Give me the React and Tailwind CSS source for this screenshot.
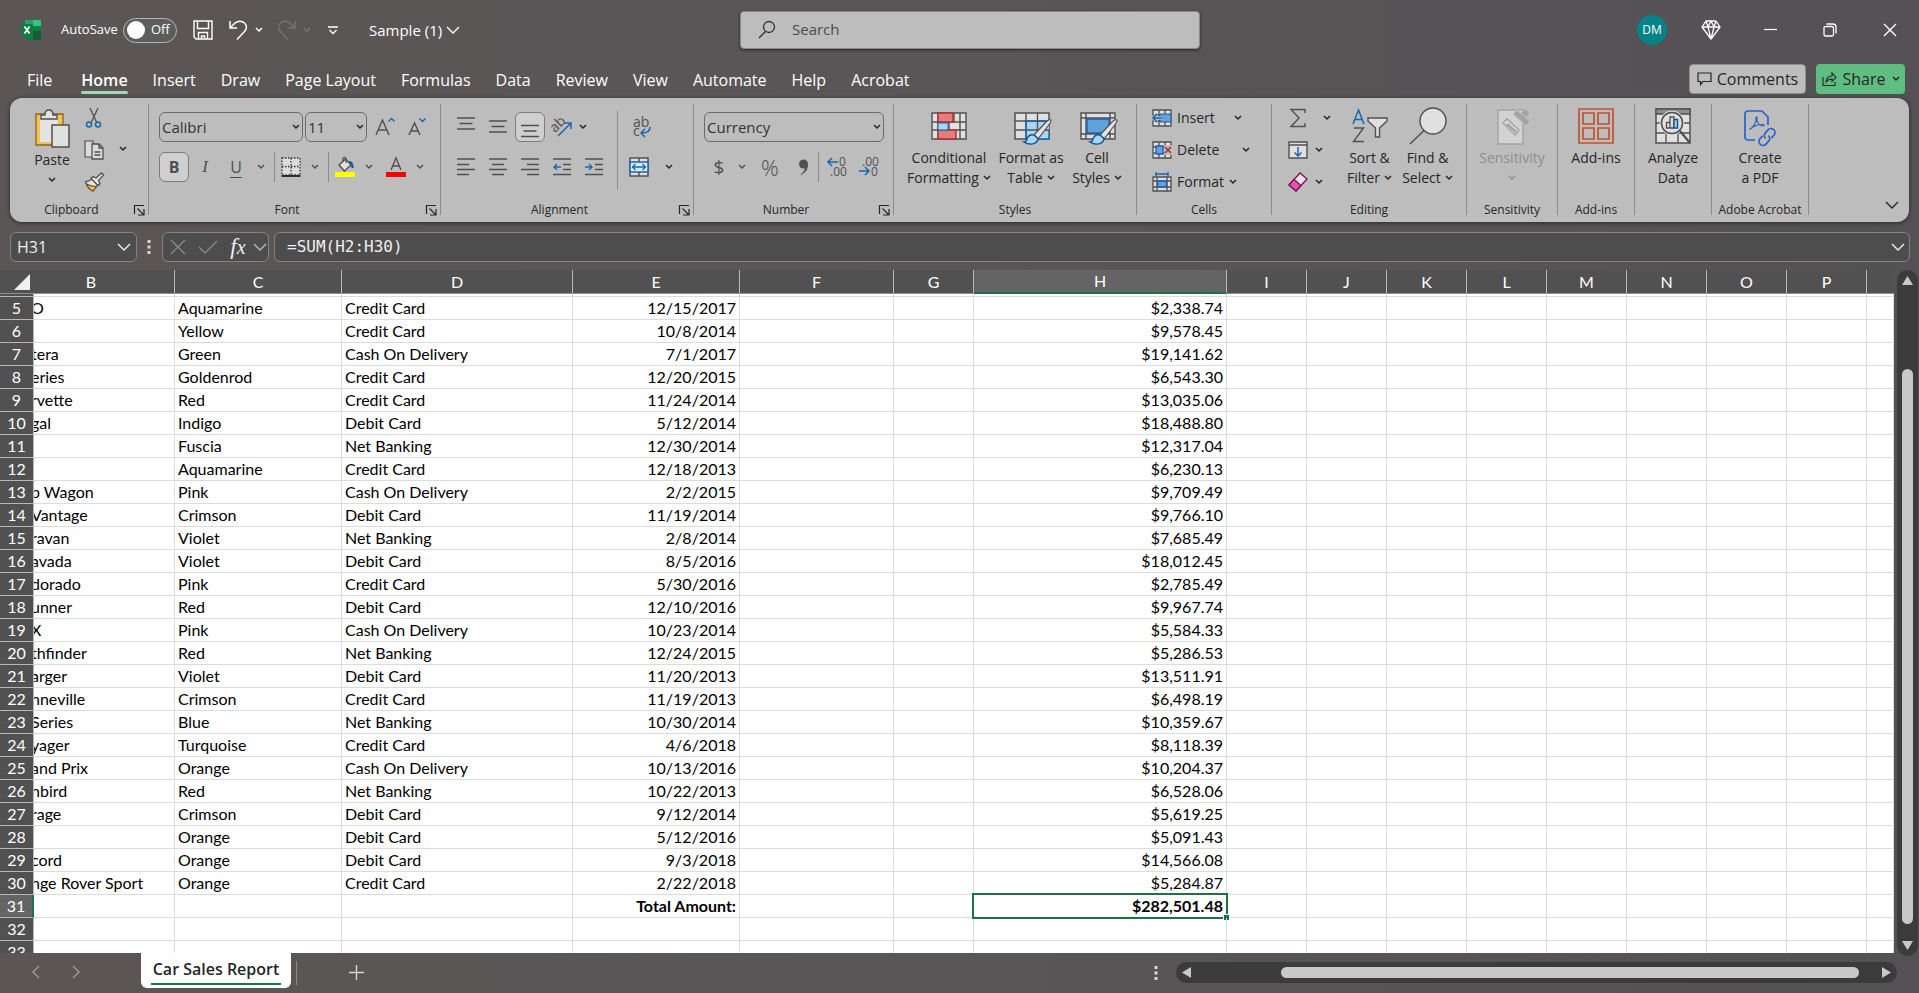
import clsx from "clsx";

// b holds the part of the model name left in view by the horizontal scroll
const rows = [
  { n: 5, b: "O", c: "Aquamarine", d: "Credit Card", e: "12/15/2017", h: "$2,338.74" },
  { n: 6, b: "", c: "Yellow", d: "Credit Card", e: "10/8/2014", h: "$9,578.45" },
  { n: 7, b: "tera", c: "Green", d: "Cash On Delivery", e: "7/1/2017", h: "$19,141.62" },
  { n: 8, b: "eries", c: "Goldenrod", d: "Credit Card", e: "12/20/2015", h: "$6,543.30" },
  { n: 9, b: "rvette", c: "Red", d: "Credit Card", e: "11/24/2014", h: "$13,035.06" },
  { n: 10, b: "gal", c: "Indigo", d: "Debit Card", e: "5/12/2014", h: "$18,488.80" },
  { n: 11, b: "", c: "Fuscia", d: "Net Banking", e: "12/30/2014", h: "$12,317.04" },
  { n: 12, b: "", c: "Aquamarine", d: "Credit Card", e: "12/18/2013", h: "$6,230.13" },
  { n: 13, b: "b Wagon", c: "Pink", d: "Cash On Delivery", e: "2/2/2015", h: "$9,709.49" },
  { n: 14, b: "Vantage", c: "Crimson", d: "Debit Card", e: "11/19/2014", h: "$9,766.10" },
  { n: 15, b: "ravan", c: "Violet", d: "Net Banking", e: "2/8/2014", h: "$7,685.49" },
  { n: 16, b: "avada", c: "Violet", d: "Debit Card", e: "8/5/2016", h: "$18,012.45" },
  { n: 17, b: "dorado", c: "Pink", d: "Credit Card", e: "5/30/2016", h: "$2,785.49" },
  { n: 18, b: "unner", c: "Red", d: "Debit Card", e: "12/10/2016", h: "$9,967.74" },
  { n: 19, b: "X", c: "Pink", d: "Cash On Delivery", e: "10/23/2014", h: "$5,584.33" },
  { n: 20, b: "thfinder", c: "Red", d: "Net Banking", e: "12/24/2015", h: "$5,286.53" },
  { n: 21, b: "arger", c: "Violet", d: "Debit Card", e: "11/20/2013", h: "$13,511.91" },
  { n: 22, b: "nneville", c: "Crimson", d: "Credit Card", e: "11/19/2013", h: "$6,498.19" },
  { n: 23, b: "Series", c: "Blue", d: "Net Banking", e: "10/30/2014", h: "$10,359.67" },
  { n: 24, b: "yager", c: "Turquoise", d: "Credit Card", e: "4/6/2018", h: "$8,118.39" },
  { n: 25, b: "and Prix", c: "Orange", d: "Cash On Delivery", e: "10/13/2016", h: "$10,204.37" },
  { n: 26, b: "nbird", c: "Red", d: "Net Banking", e: "10/22/2013", h: "$6,528.06" },
  { n: 27, b: "rage", c: "Crimson", d: "Debit Card", e: "9/12/2014", h: "$5,619.25" },
  { n: 28, b: "", c: "Orange", d: "Debit Card", e: "5/12/2016", h: "$5,091.43" },
  { n: 29, b: "cord", c: "Orange", d: "Debit Card", e: "9/3/2018", h: "$14,566.08" },
  { n: 30, b: "nge Rover Sport", c: "Orange", d: "Credit Card", e: "2/22/2018", h: "$5,284.87" },
  { n: 31, b: "", c: "", d: "", e: "Total Amount:", h: "$282,501.48" },
  { n: 32, b: "", c: "", d: "", e: "", h: "" },
  { n: 33, b: "", c: "", d: "", e: "", h: "" },
];

const columns = ["B", "C", "D", "E", "F", "G", "H", "I", "J", "K", "L", "M", "N", "O", "P", ""];
const emptyColumns = ["I", "J", "K", "L", "M", "N", "O", "P", "Q"];
const menu = ["File", "Home", "Insert", "Draw", "Page Layout", "Formulas", "Data", "Review", "View", "Automate", "Help", "Acrobat"];

function Svg({ w = 20, h = 20, children, className }) {
  return (
    <svg width={w} height={h} viewBox={`0 0 ${w} ${h}`} fill="none" stroke="#505050" className={clsx("shrink-0 overflow-visible", className)} aria-hidden="true">
      {children}
    </svg>
  );
}

function Chevron({ className }) {
  return (
    <Svg w={8} h={6} className={className}>
      <path d="M1 1l3 3 3-3" stroke="currentColor" strokeWidth="1.5" />
    </Svg>
  );
}

function BigChevron({ className }) {
  return (
    <Svg w={14} h={8} className={className}>
      <path d="M1 1l6 6 6-6" stroke="currentColor" strokeWidth="1.4" />
    </Svg>
  );
}

function IconButton({ label, className, children }) {
  return (
    <button type="button" aria-label={label} className={clsx("flex items-center justify-center shrink-0", className)}>
      {children}
    </button>
  );
}

function Drop({ label, className }) {
  return (
    <IconButton label={label} className={clsx("h-[30px]", className || "w-4")}>
      <Chevron />
    </IconButton>
  );
}

function Select({ label, value, className }) {
  return (
    <div className={clsx("relative", className)}>
      <select
        aria-label={label}
        className="w-full h-[30px] appearance-none rounded-md border border-[#6b6b6b] pl-[2px] text-[15px] text-[#333]"
      >
        <option>{value}</option>
      </select>
      <Chevron className="absolute right-[3px] top-3 pointer-events-none" />
    </div>
  );
}

function Group({ title, launcher, className, children }) {
  return (
    <div className={clsx("flex shrink-0", className)}>
      <div className="flex-1 min-w-0 flex flex-col">
        <div className="h-24 flex justify-center">{children}</div>
        <div className={clsx("h-5 flex items-center", launcher && "pr-[3px]")}>
          <span className="flex-1 text-center text-xs whitespace-nowrap">{title}</span>
          {launcher && (
            <IconButton label={`${title} settings`} className="w-3">
              <Svg w={12} h={12}>
                <path d="M1.5 10V1.5H11M4.5 4.5l6 6M11 5v6H5" stroke="#262626" strokeWidth="1.2" />
              </Svg>
            </IconButton>
          )}
        </div>
      </div>
      <div className="w-px h-[111px] bg-[#8c8c8c]" />
    </div>
  );
}

function BigButton({ icon, lines, drop, className }) {
  return (
    <button type="button" className={clsx("flex flex-col items-center text-sm leading-5 whitespace-nowrap", className)}>
      <span className="h-11 flex items-center">{icon}</span>
      {lines.map((line, i) => (
        <span key={line} className="flex items-center gap-1 h-5">
          {line}
          {drop && i === lines.length - 1 && <Chevron />}
        </span>
      ))}
    </button>
  );
}

function Lines({ d }) {
  return (
    <Svg w={18} h={20}>
      <path d={d} strokeWidth="1.3" />
    </Svg>
  );
}

function Brush() {
  return (
    <>
      <path d="M37 10c-2-1-3 0-5 2L20 25l4 4 10-13c2-3 4-5 3-6z" fill="#e3e3e3" strokeWidth="1.2" />
      <path d="M20 25c-4-1-6 1-7 4-.6 2-1.500 3-3 3 3 2 8 3 11 1 2-1 3-3 3-4.500z" fill="#a9d5f2" stroke="#14568c" strokeWidth="1.4" />
    </>
  );
}

function TitleBar() {
  return (
    <header className="h-[60px] flex items-center pl-[21px] text-white">
      <div className="flex-1 flex items-center">
        <Svg className="mr-5">
          <path d="M5 0h14a1 1 0 011 1v18a1 1 0 01-1 1H5z" fill="#107c41" stroke="none" />
          <path d="M12 0h7a1 1 0 011 1v5h-8z" fill="#33c481" stroke="none" />
          <path d="M4 0h8v6H4z" fill="#21a366" stroke="none" />
          <path d="M12 11h8v8a1 1 0 01-1 1h-7z" fill="#185c37" stroke="none" />
          <path d="M0 4h11a1 1 0 011 1v10a1 1 0 01-1 1H0z" fill="#107c41" stroke="none" />
          <path d="M3.500 6.500l5 7M8.500 6.500l-5 7" stroke="#fff" strokeWidth="1.800" />
        </Svg>
        <span id="autosave" className="text-[13px] w-[62px]">AutoSave</span>
        <button type="button" role="switch" aria-checked="false" aria-labelledby="autosave" className="w-[54px] h-[25px] rounded-full border border-[#b5b3b3] flex items-center pl-[3px] gap-[6px] text-[13px] bg-[#5e5d5d]">
          <span className="w-[18px] h-[18px] rounded-full bg-white" />
          Off
        </button>
        <IconButton label="Save" className="ml-4">
          <Svg>
            <path d="M1 1h18v18H3l-2-2zM4.500 1v7.500h11V1M5.500 19v-6.500h9V19M8.500 19v-3h3v3" stroke="#fff" strokeWidth="1.400" />
          </Svg>
        </IconButton>
        <IconButton label="Undo" className="ml-4">
          <Svg>
            <path d="M1 1v7h7M1.500 7.500L6 3c3-2.500 7-2.500 9.500 0s2.500 6 0 8.500L8 19.500" stroke="#fff" strokeWidth="1.500" />
          </Svg>
        </IconButton>
        <IconButton label="Undo history" className="ml-[2px] w-4"><Chevron /></IconButton>
        <IconButton label="Redo" className="ml-[10px] text-[#777274]">
          <Svg>
            <path d="M18 1v7h-7M17.500 7.500L13 3c-3-2.500-7-2.500-9.500 0s-2.500 6 0 8.500L11 19.500" stroke="currentColor" strokeWidth="1.500" />
          </Svg>
        </IconButton>
        <IconButton label="Redo history" className="ml-[2px] w-4 text-[#777274]"><Chevron /></IconButton>
        <IconButton label="Customize toolbar" className="ml-2 w-5">
          <Svg w={10} h={9}>
            <path d="M0 1h10M1.500 4L5 7.500 8.500 4" stroke="#fff" strokeWidth="1.300" />
          </Svg>
        </IconButton>
        <button type="button" className="ml-[26px] flex items-center gap-1 text-[15px]">
          Sample (1)
          <BigChevron />
        </button>
      </div>

      <label className="w-[460px] h-[38px] -mt-px rounded bg-[#bdbdbd] border border-[#8a8888] shadow-[0_1px_3px_#222] flex items-center pl-[17px] gap-4">
        <Svg w={18} h={20}>
          <circle cx="11" cy="7" r="5.500" stroke="#333" strokeWidth="1.300" />
          <path d="M7.500 11.500L1 18" stroke="#333" strokeWidth="1.300" />
        </Svg>
        <input type="text" aria-label="Search" placeholder="Search" className="flex-1 text-[15px] placeholder:text-[#4c4c4c] outline-none" />
      </label>

      <div className="flex-1 flex items-center justify-end">
        <button type="button" className="w-[30px] h-[30px] rounded-full bg-[#038387] text-xs">DM</button>
        <IconButton label="Premium" className="ml-[34px] mr-[19px]">
          <Svg>
            <path d="M5 1h10l4 6-9 12L1 7zM1 7h18M5 1l2 6 3 12 3-12 2-6M7 7l3-6 3 6" stroke="#fff" strokeWidth="1.300" strokeLinejoin="round" />
          </Svg>
        </IconButton>
        <IconButton label="Minimize" className="w-[60px]">
          <Svg w={14} h={14}><path d="M1 6.500h13" stroke="#fff" strokeWidth="1.200" /></Svg>
        </IconButton>
        <IconButton label="Restore" className="w-[60px]">
          <Svg w={14} h={14}>
            <rect x="1" y="3.500" width="9.500" height="9.500" rx="1.500" stroke="#fff" strokeWidth="1.300" />
            <path d="M3.500 1H10a3 3 0 013 3v6.500" stroke="#fff" strokeWidth="1.300" />
          </Svg>
        </IconButton>
        <IconButton label="Close" className="w-[59px]">
          <Svg w={14} h={14}><path d="M1 1l12 12M13 1L1 13" stroke="#fff" strokeWidth="1.400" /></Svg>
        </IconButton>
      </div>
    </header>
  );
}

function MenuBar() {
  return (
    <nav className="h-[38px] flex items-center justify-between pl-[27px] pr-[14px] text-white">
      <div className="flex items-center gap-[25px] pt-[2px]">
        {menu.map((item) => (
          <button key={item} type="button" className={clsx("relative text-base whitespace-nowrap first:mr-1", item === "Home" && "font-semibold")}>
            {item}
            {item === "Home" && <span className="absolute inset-x-0 -bottom-[2px] h-[3px] rounded bg-[#9fd8b9]" />}
          </button>
        ))}
      </div>
      <div className="flex items-center gap-[10px] text-[#262626] text-base">
        <button type="button" className="w-[117px] h-[30px] rounded bg-[#bdbdbd] border border-[#8f8f8f] flex items-center justify-center gap-[5px]">
          <Svg w={15} h={14}>
            <path d="M1 1h13v8.500H6L3.500 12.500v-3H1z" stroke="#262626" strokeWidth="1.200" />
          </Svg>
          Comments
        </button>
        <button type="button" className="w-[89px] h-[30px] rounded bg-[#5fbd82] flex items-center justify-center gap-[6px]">
          <Svg w={15} h={16}>
            <path d="M1 6v8.500h12V11M4 11c.500-4 2.500-6 6-6V2l4 4.500-4 4V8c-3 0-4.500 1-6 3z" stroke="#262626" strokeWidth="1.100" />
          </Svg>
          Share
          <Chevron />
        </button>
      </div>
    </nav>
  );
}

function ClipboardGroup() {
  return (
    <Group title="Clipboard" launcher className="w-[139px]">
      <div className="flex w-full pl-5">
        <BigButton
          className="w-11 mr-[10px] pt-[2px]"
          drop
          lines={["Paste", ""]}
          icon={
            <Svg w={36} h={40}>
              <path d="M2 6h27v31H2z" fill="#f3c15b" stroke="#8a6416" strokeWidth="1.300" />
              <path d="M6 8h18v26H6z" fill="#e3e3e3" stroke="none" />
              <path d="M7 11V7h4c0-3 1-5 4-5s4 2 4 5h4v4z" fill="#e3e3e3" strokeWidth="1.400" />
              <rect x="18" y="17" width="17" height="22" fill="#e0e0e0" strokeWidth="1.500" />
            </Svg>
          }
        />
        <div className="flex flex-col -mt-[2px]">
          <IconButton label="Cut" className="w-5 h-8">
            <Svg>
              <path d="M6 0l6.500 14M14 0L7.500 14" strokeWidth="1.300" />
              <circle cx="5" cy="16.500" r="2.500" stroke="#1767ad" strokeWidth="1.500" />
              <circle cx="14" cy="16.500" r="2.500" stroke="#1767ad" strokeWidth="1.500" />
            </Svg>
          </IconButton>
          <IconButton label="Copy" className="w-5 h-8">
            <Svg>
              <path d="M8 17H1V1h8v3" fill="#dadada" strokeWidth="1.200" />
              <path d="M8 4h7l4 4v11H8zM15 4v4h4M10.500 12h6M10.500 15h6" fill="#dadada" strokeWidth="1.300" />
            </Svg>
          </IconButton>
          <IconButton label="Format painter" className="w-5 h-8">
            <Svg>
              <path d="M1.500 9.500c3 0 5-1 6.500-3l6 6c-1.500 2-3 4-5 6.500C6 18 3.500 15 1.500 9.500z" fill="#e3e3e3" strokeWidth="1.200" />
              <path d="M2.500 12c4 2.500 6 2.500 10 2.500L9 19c-3-1-5-3-6.500-7z" fill="#f3c15b" stroke="#6b5118" strokeWidth="1.200" />
              <path d="M7 6.500l2-2 3 1.500L17.500 1l2 2-5 5.500 1.500 3-2 2z" fill="#e3e3e3" strokeWidth="1.300" />
            </Svg>
          </IconButton>
        </div>
        <Drop label="Copy options" className="w-4 ml-[11px] mt-[30px]" />
      </div>
    </Group>
  );
}

function FontGroup() {
  return (
    <Group title="Font" launcher className="w-[292px]">
      <div className="w-full pl-[10px] pt-2 flex flex-col gap-[10px]">
        <div className="flex items-center">
          <Select label="Font" value="Calibri" className="w-36" />
          <Select label="Font size" value="11" className="w-[62px] ml-[2px]" />
          <IconButton label="Increase font size" className="w-8 h-[30px] ml-[2px]">
            <Svg w={20} h={22}>
              <path d="M1 19L7.500 4 14 19M3.500 14h8" strokeWidth="1.400" />
              <path d="M13.500 5.500L16.500 2.500l3 3" stroke="#1767ad" strokeWidth="1.400" />
            </Svg>
          </IconButton>
          <IconButton label="Decrease font size" className="w-8 h-[30px]">
            <Svg w={18} h={22}>
              <path d="M1 19L6.500 7 12 19M3 15h7" strokeWidth="1.400" />
              <path d="M11.500 2.500l3 3 3-3" stroke="#1767ad" strokeWidth="1.400" />
            </Svg>
          </IconButton>
        </div>
        <div className="flex items-center text-[#505050]">
          <button type="button" aria-pressed="true" className="w-[30px] h-[30px] rounded-md border border-[#7d7d7d] bg-[#cfcfcf] font-bold text-base">B</button>
          <button type="button" className="w-8 h-[30px] italic text-[17px] font-[Liberation_Serif,serif]">I</button>
          <button type="button" className="w-[30px] h-[30px] text-base underline underline-offset-4">U</button>
          <Drop label="Underline options" className="w-4 ml-[2px]" />
          <div className="w-px h-[30px] bg-[#8c8c8c] ml-[5px]" />
          <IconButton label="Borders" className="w-8">
            <Svg>
              <rect x="1" y="1" width="18" height="17" fill="#dcdcdc" stroke="#333" strokeWidth="1.300" strokeDasharray="1.500 1.500" />
              <path d="M10 1v17M1 9.500h18" stroke="#333" strokeWidth="1.300" strokeDasharray="1.500 1.500" />
              <path d="M.500 19h19" stroke="#222" strokeWidth="1.800" />
            </Svg>
          </IconButton>
          <Drop label="Border options" />
          <div className="w-px h-[30px] bg-[#8c8c8c] ml-[5px]" />
          <IconButton label="Fill color" className="w-8">
            <Svg>
              <path d="M4 8l6.500-6L16 8l-6.500 6z" fill="#e0e0e0" strokeWidth="1.400" />
              <path d="M8 5V1.500C8 0 11 0 11 1.500V6" strokeWidth="1.200" />
              <path d="M14 5c3 0 3.500 2 3.500 6" stroke="#14568c" strokeWidth="2.200" />
              <path d="M0 15h20v5H0z" fill="#ff0" stroke="none" />
            </Svg>
          </IconButton>
          <Drop label="Fill color options" />
          <IconButton label="Font color" className="w-8 ml-[3px]">
            <Svg>
              <path d="M5 13L10 1l5 12M6.700 9h6.600" strokeWidth="1.400" />
              <path d="M0 15h20v5H0z" fill="#f00" stroke="none" />
            </Svg>
          </IconButton>
          <Drop label="Font color options" />
        </div>
      </div>
    </Group>
  );
}

function AlignmentGroup() {
  return (
    <Group title="Alignment" launcher className="w-[253px]">
      <div className="w-full pl-[9px] flex">
        <div className="w-[167px] pt-2 flex flex-col gap-[10px]">
          <div className="flex items-center">
            <IconButton label="Top align" className="w-8 h-[30px]"><Lines d="M0 1h18M2.500 6.500h13M0 12h18" /></IconButton>
            <IconButton label="Middle align" className="w-8 h-[30px]"><Lines d="M0 4h18M2.500 9.500h13M0 15h18" /></IconButton>
            <IconButton label="Bottom align" className="w-[30px] h-[30px] mx-px rounded-md border border-[#7d7d7d] bg-[#cfcfcf]"><Lines d="M0 8.500h18M2.500 14h13M0 19.500h18" /></IconButton>
            <IconButton label="Orientation" className="w-8 h-[30px]">
              <Svg w={22} h={20}>
                <text x="0" y="13" transform="rotate(-45 6 10)" fontSize="14" fill="#505050" stroke="none" fontFamily="Open Sans, sans-serif">ab</text>
                <path d="M7 19L20 6M14 6h6v6" stroke="#1767ad" strokeWidth="1.500" />
              </Svg>
            </IconButton>
            <Drop label="Orientation options" className="w-[10px]" />
          </div>
          <div className="flex items-center">
            <IconButton label="Align left" className="w-8 h-[30px]"><Lines d="M0 2h18M0 7.500h12M0 12.500h18M0 17.500h12" /></IconButton>
            <IconButton label="Center" className="w-8 h-[30px]"><Lines d="M0 2h18M3 7.500h12M0 12.500h18M3 17.500h12" /></IconButton>
            <IconButton label="Align right" className="w-8 h-[30px]"><Lines d="M0 2h18M6 7.500h12M0 12.500h18M6 17.500h12" /></IconButton>
            <IconButton label="Decrease indent" className="w-8 h-[30px]">
              <Svg w={18}>
                <path d="M0 2h18M10 7.500h8M10 12.500h8M0 17.500h18" strokeWidth="1.300" />
                <path d="M8 10H1M4 7l-3 3 3 3" stroke="#1767ad" strokeWidth="1.400" />
              </Svg>
            </IconButton>
            <IconButton label="Increase indent" className="w-8 h-[30px]">
              <Svg w={18}>
                <path d="M0 2h18M10 7.500h8M10 12.500h8M0 17.500h18" strokeWidth="1.300" />
                <path d="M0 10h7M4 7l3 3-3 3" stroke="#1767ad" strokeWidth="1.400" />
              </Svg>
            </IconButton>
          </div>
        </div>
        <div className="w-px h-[78px] mt-[7px] bg-[#8c8c8c]" />
        <div className="pt-2 pl-[11px] flex flex-col gap-[10px]">
          <IconButton label="Wrap text" className="w-6 h-[30px]">
            <Svg h={22}>
              <text x="2" y="11" fontSize="14" fill="#505050" stroke="none" fontFamily="Open Sans, sans-serif">ab</text>
              <text x="2" y="20" fontSize="14" fill="#505050" stroke="none" fontFamily="Open Sans, sans-serif">c</text>
              <path d="M19 11c0 4-3 6-8 6M14 13l-4 4 4 4" stroke="#1767ad" strokeWidth="1.500" />
            </Svg>
          </IconButton>
          <div className="flex items-center">
            <IconButton label="Merge and center" className="w-5">
              <Svg>
                <path d="M1 1h18v18H1zM10 1v5M10 15v4" fill="#e0e0e0" strokeWidth="1.500" />
                <path d="M1 5h18v10H1z" fill="#dcebf6" stroke="#1767ad" strokeWidth="1.500" />
                <path d="M3.500 10h13M6.500 7l-3 3 3 3M13.500 7l3 3-3 3" stroke="#1767ad" strokeWidth="1.300" />
              </Svg>
            </IconButton>
            <Drop label="Merge options" className="w-4 ml-3" />
          </div>
        </div>
      </div>
    </Group>
  );
}

function NumberGroup() {
  return (
    <Group title="Number" launcher className="w-[200px]">
      <div className="w-full pl-[10px] pt-2 flex flex-col gap-[10px]">
        <Select label="Number format" value="Currency" className="w-[180px]" />
        <div className="flex items-center text-[#505050]">
          <button type="button" className="w-[30px] text-[19px] leading-[30px]">$</button>
          <Drop label="Accounting options" />
          <button type="button" className="w-10 text-[22px] leading-[30px] font-light">%</button>
          <IconButton label="Comma style" className="w-7">
            <Svg w={12} h={18}>
              <circle cx="5.500" cy="6" r="4.500" fill="#505050" stroke="none" />
              <path d="M10 6c0 5-2 9-8 11 3-2 5-5 5-8z" fill="#505050" stroke="none" />
            </Svg>
          </IconButton>
          <div className="w-px h-[30px] bg-[#8c8c8c]" />
          <IconButton label="Increase decimal" className="w-8 ml-[2px]">
            <Svg w={20} h={22}>
              <text x="12" y="10" fontSize="12" fill="#505050" stroke="none" fontFamily="Open Sans, sans-serif">0</text>
              <text x="3" y="20" fontSize="12" fill="#505050" stroke="none" fontFamily="Open Sans, sans-serif">.00</text>
              <path d="M11 6H1M5 2L1 6l4 4" stroke="#1767ad" strokeWidth="1.500" />
            </Svg>
          </IconButton>
          <IconButton label="Decrease decimal" className="w-8">
            <Svg w={20} h={22}>
              <text x="3" y="10" fontSize="12" fill="#505050" stroke="none" fontFamily="Open Sans, sans-serif">.00</text>
              <text x="12" y="20" fontSize="12" fill="#505050" stroke="none" fontFamily="Open Sans, sans-serif">0</text>
              <path d="M0 15h10M6 11l4 4-4 4" stroke="#1767ad" strokeWidth="1.500" />
            </Svg>
          </IconButton>
        </div>
      </div>
    </Group>
  );
}

function StylesGroup() {
  return (
    <Group title="Styles" className="w-[243px]">
      <BigButton
        className="w-[88px]"
        drop
        lines={["Conditional", "Formatting"]}
        icon={
          <Svg w={36} h={28}>
            <path d="M1 1h34v26H1zM1 10h34M1 18h34M7 1v26M23 1v9M29 1v26M18 10v8" fill="#e0e0e0" strokeWidth="1.400" />
            <path d="M7 1h15v9H7zM7 18h18v9H7z" fill="#e87c7c" stroke="#a83232" strokeWidth="1.400" />
            <path d="M7 11h10v7H7z" fill="#a9d5f2" stroke="#1767ad" />
          </Svg>
        }
      />
      <BigButton
        className="w-[76px]"
        drop
        lines={["Format as", "Table"]}
        icon={
          <Svg w={38} h={36} className="ml-1">
            <path d="M1 5h34v26H1z" fill="#e0e0e0" strokeWidth="1.500" />
            <path d="M12 13h23v18H12z" fill="#a9d5f2" stroke="none" />
            <path d="M12 5v26M23.500 5v26M1 13h34M1 22h34" strokeWidth="1.400" />
            <path d="M12 13h23M12 13v18h23V22" stroke="#1767ad" strokeWidth="1.400" />
            <g transform="translate(0 2)"><Brush /></g>
          </Svg>
        }
      />
      <BigButton
        className="w-14"
        drop
        lines={["Cell", "Styles"]}
        icon={
          <Svg w={38} h={36} className="ml-1">
            <path d="M1 5h34v26H1zM6 5v26M30 5v26M1 10h34M1 26h34" fill="#e0e0e0" strokeWidth="1.400" />
            <path d="M7 11h22v14H7z" fill="#5fa3d9" stroke="#2659ad" strokeWidth="1.400" />
            <g transform="translate(0 2)"><Brush /></g>
          </Svg>
        }
      />
    </Group>
  );
}

function CellsGroup() {
  const grid = <path d="M1 2h18v16H1zM7 2v16M13 2v16M1 7h18M1 13h18" fill="#e0e0e0" strokeWidth="1.300" />;
  return (
    <Group title="Cells" className="w-[135px]">
      <div className="w-full pl-[15px] -mt-[2px] flex flex-col text-sm">
        <button type="button" className="h-8 flex items-center gap-[5px]">
          <Svg>
            {grid}
            <path d="M8 6h11v8H8z" fill="#5fa3d9" stroke="#2659ad" />
            <path d="M10 10H1M5 6l-4 4 4 4" stroke="#bdbdbd" strokeWidth="3.500" />
            <path d="M10 10H1M5 6l-4 4 4 4" stroke="#1767ad" strokeWidth="1.500" />
          </Svg>
          <span className="w-[52px] text-left">Insert</span>
          <Chevron />
        </button>
        <button type="button" className="h-8 flex items-center gap-[5px]">
          <Svg>
            {grid}
            <path d="M4 6h7v8H4z" fill="#5fa3d9" stroke="#2659ad" strokeWidth="1.300" />
            <path d="M12 5h8v10h-8z" fill="#bdbdbd" stroke="none" />
            <path d="M13 7l6 6M19 7l-6 6" stroke="#b32b2b" strokeWidth="1.600" />
          </Svg>
          <span className="w-[60px] text-left">Delete</span>
          <Chevron />
        </button>
        <button type="button" className="h-8 flex items-center gap-[5px]">
          <Svg>
            <path d="M1 5h18v14H1zM5 5v14M15 5v14M1 9h18M1 15h18" fill="#e0e0e0" strokeWidth="1.300" />
            <path d="M5.500 9h9v6h-9z" fill="#5fa3d9" stroke="#2659ad" strokeWidth="1.300" />
            <path d="M4 0v4M16 0v4M4 2h12" stroke="#1767ad" strokeWidth="1.400" />
          </Svg>
          Format
          <Chevron />
        </button>
      </div>
    </Group>
  );
}

function EditingGroup() {
  return (
    <Group title="Editing" className="w-[195px]">
      <div className="flex flex-col ml-1 -mt-[2px]">
        <div className="flex items-center h-8">
          <IconButton label="Sum" className="w-5">
            <Svg><path d="M17 5V1.500H3L11 10l-8 8.500h14V15" strokeWidth="1.400" /></Svg>
          </IconButton>
          <Drop label="Sum options" className="w-4 ml-[11px]" />
        </div>
        <div className="flex items-center h-8">
          <IconButton label="Fill" className="w-5">
            <Svg>
              <path d="M1 2h18v16H1zM1 5h18" fill="#e0e0e0" strokeWidth="1.400" />
              <path d="M10 7v9M6.500 12.500L10 16l3.500-3.500" stroke="#1767ad" strokeWidth="1.500" />
            </Svg>
          </IconButton>
          <Drop label="Fill options" className="w-4 ml-[3px]" />
        </div>
        <div className="flex items-center h-8">
          <IconButton label="Clear" className="w-5">
            <Svg>
              <path d="M1 13L12 1l7 6L8 19z" fill="#e3e3e3" stroke="#7d1458" strokeWidth="1.300" />
              <path d="M1 13l5-5.500 7 6L8 19z" fill="#dd55ad" stroke="#7d1458" strokeWidth="1.300" />
            </Svg>
          </IconButton>
          <Drop label="Clear options" className="w-4 ml-[3px]" />
        </div>
      </div>
      <BigButton
        className="w-[62px] ml-1"
        drop
        lines={["Sort &", "Filter"]}
        icon={
          <Svg w={36} h={36}>
            <path d="M1 16L6.500 2 12 16M3 11.500h7" stroke="#1767ad" strokeWidth="1.500" />
            <path d="M2 20h9.500L1.500 33.500H12" strokeWidth="1.400" />
            <path d="M16 10h19v3l-7.500 7v9h-4v-9L16 13z" fill="#e0e0e0" strokeWidth="1.400" />
          </Svg>
        }
      />
      <BigButton
        className="w-[54px]"
        drop
        lines={["Find &", "Select"]}
        icon={
          <Svg w={38} h={38}>
            <circle cx="24" cy="14" r="13" fill="#e0e0e0" strokeWidth="1.400" />
            <path d="M15 23.500L1 37" strokeWidth="1.500" />
          </Svg>
        }
      />
    </Group>
  );
}

function Ribbon() {
  return (
    <section className="mx-[10px] h-[124px] pt-1.5 rounded-xl bg-[#bdbdbd] shadow-[0_1px_4px_#2a2a2a] flex text-[#262626]">
      <ClipboardGroup />
      <FontGroup />
      <AlignmentGroup />
      <NumberGroup />
      <StylesGroup />
      <CellsGroup />
      <EditingGroup />
      <Group title="Sensitivity" className="w-[91px]">
        <button type="button" disabled className="flex flex-col items-center text-sm text-[#8d8d8d]">
          <span className="h-11 flex items-center">
            <Svg w={36} h={40} className="ml-1">
              <path d="M2 4h25v34H2z" fill="#d2d2d2" stroke="#a3a3a3" strokeWidth="1.400" />
              <path d="M7 17l4-4 12 11-4 5z" fill="#dadada" stroke="#a3a3a3" strokeWidth="1.300" />
              <path d="M11 18l9 8" stroke="#a3a3a3" strokeWidth="2.500" />
              <path d="M17 8l4-4 13 11-4 5z" fill="#a3a3a3" stroke="#c4c4c4" />
              <path d="M25 7l4-5 5 5-4 5z" fill="#a3a3a3" stroke="#c4c4c4" />
            </Svg>
          </span>
          <span className="leading-5">Sensitivity</span>
          <span className="h-5 flex items-center"><Chevron /></span>
        </button>
      </Group>
      <Group title="Add-ins" className="w-[77px]">
        <BigButton
          lines={["Add-ins"]}
          icon={
            <Svg w={36} h={36}>
              <path d="M1 1h34v34H1zM5 5h11v11H5zM20 5h11v11H20zM5 20h11v11H5zM20 20h11v11H20z" stroke="#c2512f" strokeWidth="1.700" />
            </Svg>
          }
        />
      </Group>
      <Group title="" className="w-[77px]">
        <BigButton
          lines={["Analyze", "Data"]}
          icon={
            <Svg w={36} h={36}>
              <path d="M1 1h34v34H1z" fill="#e0e0e0" strokeWidth="1.500" />
              <path d="M1 1h34v5H1z" fill="#8f8f8f" strokeWidth="1.300" />
              <path d="M1 15h6M29 15h6M1 25h34M11 25v10M23 25v10" strokeWidth="1.300" />
              <circle cx="17" cy="15" r="12" fill="#bdbdbd" stroke="#e0e0e0" />
              <circle cx="17" cy="15" r="10.500" fill="#e0e0e0" strokeWidth="1.500" />
              <path d="M25 23l10 12" strokeWidth="2.200" />
              <path d="M11.500 14.500h3.500V20h-3.500zM15 9h4v11h-4z" strokeWidth="1.300" />
              <path d="M19 11.500h3.500V20H19z" fill="#a9d5f2" stroke="#14568c" strokeWidth="1.500" />
            </Svg>
          }
        />
      </Group>
      <Group title="Adobe Acrobat" className="w-[97px]">
        <BigButton
          lines={["Create", "a PDF"]}
          icon={
            <Svg w={32} h={36} className="mt-1">
              <path d="M11 30H4a3 3 0 01-3-3V4a3 3 0 013-3h14l6 6v8" stroke="#2a5fc9" strokeWidth="1.700" />
              <path d="M6 19c3-1 7-7 6-11-.300-1.500 1.500-1.500 1 0-1 4 3 8 6 8 1.500 0 1.500-1.500 0-1.500-4 0-9 1-12 4-1 1-2 .500-1 .500z" stroke="#2a5fc9" strokeWidth="1.100" />
              <g transform="rotate(-48 23 27)" stroke="#2a5fc9" strokeWidth="1.700">
                <path d="M21 23h-4a4 4 0 000 8h4a4 4 0 004-4M25 31h4a4 4 0 000-8h-4a4 4 0 00-4 4" />
              </g>
            </Svg>
          }
        />
      </Group>
      <div className="flex-1 flex justify-end items-end pr-[10px] pb-[13px]">
        <IconButton label="Collapse ribbon"><BigChevron /></IconButton>
      </div>
    </section>
  );
}

function FormulaBar() {
  return (
    <div className="ml-[10px] mr-[9px] mt-[10px] mb-2 h-[30px] flex items-center text-[#f0f0f0]">
      <div className="w-[127px] h-[30px] flex items-center rounded-md border border-[#858282] bg-[#4d4d4d] pl-[6px] pr-[5px]">
        <input type="text" aria-label="Name box" defaultValue="H31" className="flex-1 min-w-0 text-base outline-none" />
        <BigChevron />
      </div>
      <Svg w={4} h={14} className="ml-[10px] mr-[11px]">
        <path d="M2 0v3M2 5.500v3M2 11v3" stroke="#d8d8d8" strokeWidth="3" />
      </Svg>
      <div className="w-[107px] h-[30px] flex items-center rounded-md border border-[#858282] bg-[#4d4d4d] pl-[7px]">
        <IconButton label="Cancel">
          <Svg w={16} h={16}><path d="M1 1l14 14M15 1L1 15" stroke="#8c8c8c" strokeWidth="1.300" /></Svg>
        </IconButton>
        <IconButton label="Enter" className="ml-3">
          <Svg><path d="M1 10l6 6L19 4" stroke="#8c8c8c" strokeWidth="1.300" /></Svg>
        </IconButton>
        <button type="button" className="ml-[10px] w-5 text-[23px] leading-6 italic font-[Liberation_Serif,serif]">
          f<span className="text-xl">x</span>
        </button>
        <BigChevron className="ml-[5px] text-[#b8b8b8]" />
      </div>
      <div className="flex-1 ml-[5px] h-[30px] flex items-center rounded-md border border-[#858282] bg-[#4d4d4d] pl-3 pr-1">
        <input type="text" aria-label="Formula" defaultValue="=SUM(H2:H30)" className="flex-1 text-base outline-none font-[DejaVu_Sans_Mono,monospace]" />
        <BigChevron />
      </div>
    </div>
  );
}

function Sheet() {
  const cell = "border-r border-b border-[#dcdcdc] px-[3px] whitespace-nowrap";
  return (
    <div className="flex-1 min-w-0 overflow-hidden bg-white">
      <table className="w-full table-fixed border-separate border-spacing-0 text-base leading-[22px] text-black font-[Lato,sans-serif]">
        <colgroup>
          <col className="w-[34px]" />
          <col className="w-[141px]" />
          <col className="w-[167px]" />
          <col className="w-[231px]" />
          <col className="w-[167px]" />
          <col className="w-[154px]" />
          <col className="w-20" />
          <col className="w-[253px]" />
          {emptyColumns.slice(0, 8).map((c) => <col key={c} className="w-20" />)}
          <col />
        </colgroup>
        <thead>
          <tr className="h-6 bg-[#515151] text-white">
            <th className="border-b border-[#8f8f8f] p-0">
              <Svg w={16} h={16} className="ml-auto mr-1"><path d="M16 0v16H0z" fill="#f0f0f0" stroke="none" /></Svg>
            </th>
            {columns.map((c) => (
              <th
                key={c}
                className={clsx(
                  "border-r border-r-[#b8b8b8] py-0 pl-0 font-normal",
                  c === "H" ? "bg-[#646464] border-b-2 border-b-[#1e7145]" : "border-b border-b-[#8f8f8f]",
                  c === "B" ? "pr-[26px]" : "pr-0",
                  c === "" && "border-r-0"
                )}
              >
                {c}
              </th>
            ))}
          </tr>
        </thead>
        <tbody>
          {/* sliver of the row scrolled under the header */}
          <tr className="h-[3px]">
            <td className="border-r border-b border-[#b8b8b8] bg-[#515151] p-0" />
            {columns.map((c) => <td key={c} className="border-r border-b border-[#dcdcdc] p-0" />)}
          </tr>
          {rows.map((row) => (
            <tr key={row.n} className={clsx("h-[23px]", row.n === 31 && "font-bold")}>
              <th
                scope="row"
                className={clsx(
                  "border-b border-b-[#b8b8b8] p-0 font-normal text-white",
                  row.n === 31 ? "bg-[#646464] border-r-2 border-r-[#1e7145]" : "bg-[#515151] border-r border-r-[#b8b8b8]"
                )}
              >
                {row.n}
              </th>
              <td className="border-r border-b border-[#dcdcdc] p-0">
                <div className="overflow-hidden">
                  <div className="-ml-[3px] whitespace-nowrap">{row.b}</div>
                </div>
              </td>
              <td className={cell}>{row.c}</td>
              <td className={cell}>{row.d}</td>
              <td className={clsx(cell, "text-right")}>{row.e}</td>
              <td className={cell} />
              <td className={cell} />
              <td className={clsx(cell, "text-right relative")}>
                {row.h}
                {row.n === 31 && (
                  <span className="absolute -inset-[2px] border-2 border-[#1e7145]">
                    <span className="absolute -right-[3px] -bottom-[3px] w-[5px] h-[5px] bg-[#1e7145] outline outline-white" />
                  </span>
                )}
              </td>
              {emptyColumns.map((c) => <td key={c} className={cell} />)}
            </tr>
          ))}
        </tbody>
      </table>
    </div>
  );
}

function VerticalScroll() {
  return (
    <div className="w-[21px] ml-[3px] mr-px -mb-[3px] rounded-full bg-[#3b3b3b] flex flex-col items-center py-[6px] z-10">
      <Svg w={11} h={9}><path d="M5.500 0L11 9H0z" fill="#c8c8c8" stroke="none" /></Svg>
      <div className="flex-[84]" />
      <div className="flex-[556] w-[11px] rounded-full bg-[#c8c8c8]" />
      <div className="flex-[17]" />
      <Svg w={11} h={9}><path d="M0 0h11L5.500 9z" fill="#c8c8c8" stroke="none" /></Svg>
    </div>
  );
}

function SheetTabs() {
  return (
    <footer className="h-10 shrink-0 flex pl-7 pr-[22px] text-[#c8c8c8]">
      <IconButton label="Previous sheet" className="w-4 h-[38px]">
        <Svg w={8} h={14}><path d="M7 1L1 7l6 6" stroke="#9c9c9c" strokeWidth="1.400" /></Svg>
      </IconButton>
      <IconButton label="Next sheet" className="w-4 h-[38px] ml-6">
        <Svg w={8} h={14}><path d="M1 1l6 6-6 6" stroke="#9c9c9c" strokeWidth="1.400" /></Svg>
      </IconButton>
      <button type="button" className="ml-[57px] w-[150px] h-[35px] rounded-b-md bg-white text-[#262626] text-base font-semibold px-[10px] flex">
        <span className="flex-1 h-8 border-b-2 border-[#107c41] leading-[32px] whitespace-nowrap">Car Sales Report</span>
      </button>
      <div className="w-px h-6 mt-2 ml-[5px] bg-[#8c8c8c]" />
      <IconButton label="New sheet" className="w-5 h-[38px] ml-[49px]">
        <Svg w={15} h={15}><path d="M7.500 0v15M0 7.500h15" stroke="#d8d8d8" strokeWidth="1.400" /></Svg>
      </IconButton>
      <div className="flex-1 h-[39px] flex justify-end items-center">
        <Svg w={4} h={14} className="mr-[18px]">
          <path d="M2 0v3M2 5.500v3M2 11v3" stroke="#d8d8d8" strokeWidth="3" />
        </Svg>
        <div className="w-[721px] h-[21px] rounded-full bg-[#3b3b3b] flex items-center px-[6px]">
          <Svg w={9} h={11}><path d="M9 0v11L0 5.500z" fill="#c8c8c8" stroke="none" /></Svg>
          <div className="flex-[90]" />
          <div className="flex-[578] h-[11px] rounded-full bg-[#c8c8c8]" />
          <div className="flex-[23]" />
          <Svg w={9} h={11}><path d="M0 0v11l9-5.500z" fill="#c8c8c8" stroke="none" /></Svg>
        </div>
      </div>
    </footer>
  );
}

export default function App() {
  return (
    <div className="h-screen overflow-hidden flex flex-col bg-linear-to-r from-[#5b5655] via-[#5a5557] to-[#545154] font-[Open_Sans,sans-serif]">
      <TitleBar />
      <MenuBar />
      <Ribbon />
      <FormulaBar />
      <main className="flex-1 min-h-0 flex">
        <Sheet />
        <VerticalScroll />
      </main>
      <SheetTabs />
    </div>
  );
}
